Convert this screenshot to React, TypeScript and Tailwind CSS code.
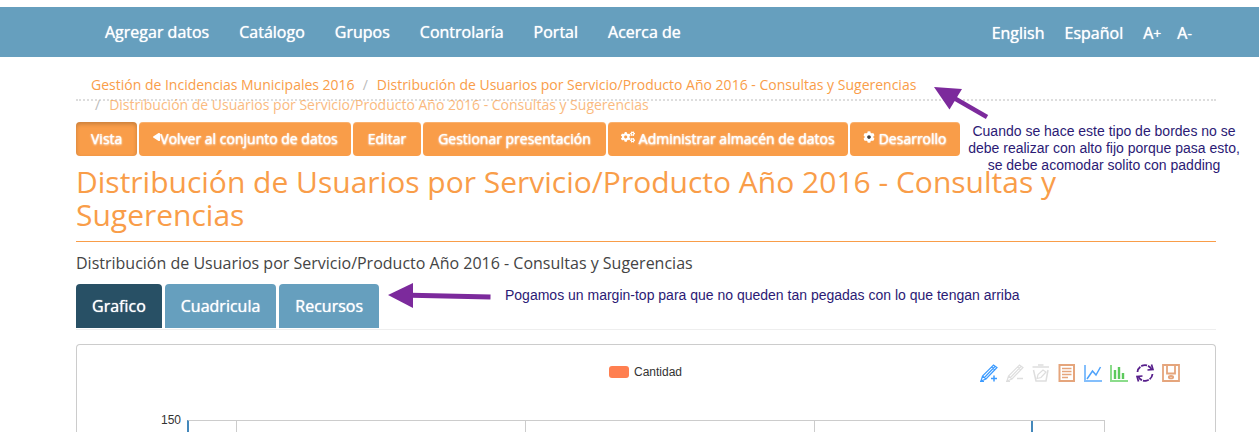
import { FaCaretLeft, FaCogs, FaCog } from "react-icons/fa";
import type { ReactNode } from "react";

const title = "Distribución de Usuarios por Servicio/Producto Año 2016 - Consultas y Sugerencias";

function NavBar() {
  const main = ["Agregar datos", "Catálogo", "Grupos", "Controlaría", "Portal", "Acerca de"];
  return (
    <header className="mt-[7px] flex h-[50px] items-center justify-between bg-[#669fbe] pr-[67px] pl-[105px] text-base leading-5 text-white [text-shadow:0_0_1px_#fff]">
      <nav aria-label="Principal" className="flex gap-[30px]">
        {main.map((m) => (
          <a key={m} href="#">{m}</a>
        ))}
      </nav>
      <nav aria-label="Idioma y tamaño" className="flex items-baseline gap-5 pt-0.5">
        <a href="#">English</a>
        <a href="#">Español</a>
        <a href="#">A<span className="text-sm">+</span></a>
        <a href="#" className="-ml-1">A<span className="text-sm">-</span></a>
      </nav>
    </header>
  );
}

function Slash() {
  return <span aria-hidden="true" className="mr-[9px] ml-1 text-[#bbbbbb]">/</span>;
}

function Breadcrumb() {
  return (
    <nav aria-label="Ruta" className="h-11 border-b-2 border-dotted border-[#dddddd] px-[15px] pt-[18px]">
      <ol className="flex flex-wrap gap-x-1 text-sm leading-5 text-[#f99d49]">
        <li><a href="#">Gestión de Incidencias Municipales 2016</a></li>
        <li><Slash /><a href="#">{title}</a></li>
        <li><Slash /><a href="#" className="opacity-70">{title}</a></li>
      </ol>
    </nav>
  );
}

function ActionButton({ children, active, icon }: { children: ReactNode; active?: boolean; icon?: ReactNode }) {
  return (
    <button
      className={
        "flex h-[34px] items-center rounded bg-[#f99d49] text-sm leading-5 font-normal whitespace-nowrap text-white [text-shadow:0_0_1px_#fff,0_1px_2px_#fff] " +
        (icon ? "px-[13px] " : "px-[15px] ") +
        (active ? "shadow-[inset_0_2px_4px_rgba(0,0,0,0.2)]" : "shadow-[inset_0_1px_0_rgba(255,255,255,0.2)]")
      }
    >
      {icon}
      {children}
    </button>
  );
}

function Tab({ children, active }: { children: ReactNode; active?: boolean }) {
  return (
    <button
      role="tab"
      aria-selected={!!active}
      className={"h-11 rounded-t px-4 text-base leading-5 text-white [text-shadow:0_0_1px_#fff] " + (active ? "bg-[#285065]" : "bg-[#669fbe]")}
    >
      {children}
    </button>
  );
}

function Tool({ label, color, children }: { label: string; color: string; children: ReactNode }) {
  return (
    <button aria-label={label} className="size-[18px]">
      <svg viewBox="0 0 18 18" width="18" height="18" fill="none" stroke={color} strokeWidth="1.5">
        {children}
      </svg>
    </button>
  );
}

const pencil = (
  <>
    <path d="M1 17 L2.5 12 L13.5 1 L17 3.5 L6 15 Z M2.5 12 L6 15 M4.5 13.5 L15 2.5 M11.5 3 L15 6" strokeWidth="1.2" />
    <path d="M0 17.5 H4" />
  </>
);

function Toolbox() {
  return (
    <div className="flex gap-2">
      <Tool label="Marcar" color="#3c9bff">{pencil}<path d="M11 14.5 H17 M14 11.5 V17.5" /></Tool>
      <Tool label="Desmarcar" color="#dedede">{pencil}<path d="M11 14.5 H17" /></Tool>
      <Tool label="Borrar marcas" color="#dedede">
        <path d="M0.5 3 H17 M6 1 H11.5 M1.5 6 L4 17 H14 L16 6" />
        <path d="M5 14.5 L6 10.5 L11 6 L14 8 L9 13.5 Z" strokeWidth="1.2" />
      </Tool>
      <Tool label="Ver datos" color="#e5a57c">
        <path d="M1.5 1 H16 V17 H1.5 Z" strokeWidth="2" />
        <path d="M4 4.5 H13.5 M4 7.5 H13.5 M4 10.5 H13.5 M4 13.5 H10" />
      </Tool>
      <Tool label="Líneas" color="#4da2fb">
        <path d="M1 1 V17 H18" stroke="#84bffc" strokeWidth="2" />
        <path d="M3 15 L8.5 7 L12 11 L16.5 3" />
      </Tool>
      <Tool label="Barras" color="#5cc95c">
        <path d="M1 1 V17 H18" stroke="#8bdc8b" strokeWidth="2" />
        <path d="M5 15 V6 M9 15 V3 M13 15 V9" strokeWidth="2.4" />
      </Tool>
      <Tool label="Restaurar" color="#571f8b">
        <path d="M1.5 8 A7.5 7.5 0 0 1 15.500 5 M16.5 10 A7.5 7.5 0 0 1 2.5 13" strokeWidth="1.8" strokeDasharray="6 1" />
        <path d="M15.5 0.5 L17 5.5 L11.5 6 M2.5 17.500 L1 12.5 L6.5 12" strokeWidth="1.7" />
      </Tool>
      <Tool label="Guardar" color="#e5a57c">
        <path d="M1 1 H17 V17 H1 Z M5 1 V9.5 H13 V1" strokeWidth="1.8" />
        <ellipse cx="9" cy="13.2" rx="2.2" ry="1.2" strokeWidth="1.8" />
      </Tool>
    </div>
  );
}

function ChartCard() {
  return (
    <section className="mt-[14px] rounded-t border border-b-0 border-[#cccccc] pt-[19px]">
      <div className="grid grid-cols-3 items-start pr-[35px] font-['Liberation_Sans',sans-serif] text-xs leading-4 text-[#333333]">
        <div className="col-start-2 flex items-center justify-center gap-[5px] pl-[34px]">
          <span className="h-3 w-5 rounded-[3px] bg-[#ff7f50]" />
          Cantidad
        </div>
        <div className="flex justify-end"><Toolbox /></div>
      </div>
      <div className="mt-8 flex pr-[110px] pl-[84px] font-['Liberation_Sans',sans-serif] text-xs leading-3 text-[#333333]">
        <span className="w-[26px]">150</span>
        <div className="mt-1.5 flex h-3 flex-1 border-t border-r border-l-2 border-t-[#cccccc] border-r-[#cccccc] border-l-[#4488bb]">
          <div className="w-12 border-r border-[#cccccc]" />
          <div className="flex-[289] border-r border-[#cccccc]" />
          <div className="flex-[290] border-r border-[#cccccc]" />
          <div className="flex-[217] border-r-2 border-[#4488bb]" />
          <div className="flex-[71]" />
        </div>
      </div>
    </section>
  );
}

function Notes() {
  return (
    <>
      <svg className="absolute top-[80px] left-[930px]" width="62" height="42" viewBox="930 80 62 42">
        <path d="M934 87 L962 89 L949.5 109.5 Z" fill="#7c2a9c" />
        <path d="M954 98 L987 117" stroke="#7c2a9c" strokeWidth="4.5" />
      </svg>
      <p className="absolute top-[123px] left-[954px] w-[300px] text-center font-['Liberation_Sans',sans-serif] text-sm leading-[17px] text-[#2b1a75]">
        Cuando se hace este tipo de bordes no se<br />debe realizar con alto fijo porque pasa esto,<br />se debe acomodar solito con padding
      </p>
      <svg className="absolute top-[280px] left-[386px]" width="108" height="32" viewBox="386 280 108 32">
        <path d="M388 295 L413 283 V308 Z" fill="#7c2a9c" />
        <path d="M411 295.3 L490.5 297" stroke="#7c2a9c" strokeWidth="5" />
      </svg>
      <p className="absolute top-[287px] left-[505px] font-['Liberation_Sans',sans-serif] text-sm leading-[17px] whitespace-nowrap text-[#2b1a75]">
        Pogamos un margin-top para que no queden tan pegadas con lo que tengan arriba
      </p>
    </>
  );
}

export default function App() {
  return (
    <div className="relative flow-root bg-white font-['Open_Sans',sans-serif]">
      <NavBar />
      <main className="pr-[43px] pl-[76px]">
        <Breadcrumb />
        <div className="mt-[21px] flex gap-0.5">
          <ActionButton active>Vista</ActionButton>
          <ActionButton icon={<FaCaretLeft preserveAspectRatio="none" className="-mt-1 h-3.5 w-2" />}>Volver al conjunto de datos</ActionButton>
          <ActionButton>Editar</ActionButton>
          <ActionButton>Gestionar presentación</ActionButton>
          <ActionButton icon={<FaCogs className="-mt-1 mr-1 size-[14px]" />}>Administrar almacén de datos</ActionButton>
          <ActionButton icon={<FaCog className="-mt-1 mr-1 size-3 rounded-full bg-radial from-[#444444] from-20% to-transparent to-50%" />}>Desarrollo</ActionButton>
        </div>
        <h1 className="mt-[9px] border-b border-[#f99d49] pb-2.5 text-[30px] leading-[33px] text-[#f99d49]">{title}</h1>
        <p className="mt-[11px] text-base leading-5 text-[#444444]">{title}</p>
        <div role="tablist" className="mt-[11px] flex gap-[3px] border-b border-[#eeeeee] pb-px">
          <Tab active>Grafico</Tab>
          <Tab>Cuadricula</Tab>
          <Tab>Recursos</Tab>
        </div>
        <ChartCard />
      </main>
      <Notes />
    </div>
  );
}
